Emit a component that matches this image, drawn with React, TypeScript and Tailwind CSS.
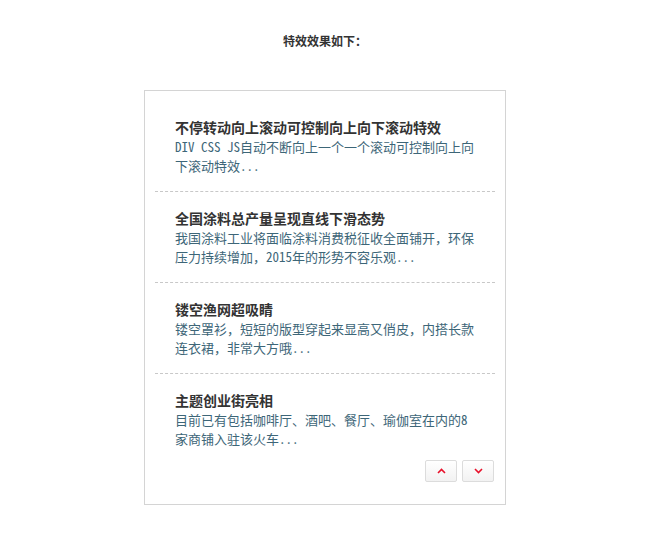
import { useState } from "react";

type News = { title: string; desc: string };

const items: News[] = [
  { title: "不停转动向上滚动可控制向上向下滚动特效", desc: "DIV CSS JS自动不断向上一个一个滚动可控制向上向下滚动特效..." },
  { title: "全国涂料总产量呈现直线下滑态势", desc: "我国涂料工业将面临涂料消费税征收全面铺开，环保压力持续增加，2015年的形势不容乐观..." },
  { title: "镂空渔网超吸睛", desc: "镂空罩衫，短短的版型穿起来显高又俏皮，内搭长款连衣裙，非常大方哦..." },
  { title: "主题创业街亮相", desc: "目前已有包括咖啡厅、酒吧、餐厅、瑜伽室在内的8家商铺入驻该火车..." },
];

const Chevron = ({ up }: { up?: boolean }) => (
  <svg width="9" height="6" viewBox="0 0 9 6" fill="none">
    <path d={up ? "M1 5 L4.5 1.5 L8 5" : "M1 1 L4.5 4.5 L8 1"} stroke="#e8102a" strokeWidth="1.6" />
  </svg>
);

export default function App() {
  const [list, setList] = useState(items);

  const up = () => setList((l) => [...l.slice(1), l[0]]);
  const down = () => setList((l) => [l[l.length - 1], ...l.slice(0, -1)]);

  return (
    <div className="min-h-[541px] bg-white pt-[31px]" style={{ fontFamily: '"Noto Sans Mono CJK SC", "Noto Sans CJK SC", sans-serif' }}>
      <div className="text-center text-[12px] leading-[20px] font-bold text-[#333]">特效效果如下：</div>

      <div className="mx-auto mt-[39px] w-[362px] border border-[#d4d4d4] pt-[10px] pb-[22px]">
        {list.map((n, i) => (
          <div
            key={n.title}
            className={`mx-[10px] px-[20px] pt-[16px] ${i < list.length - 1 ? "pb-[16px] border-b border-dashed border-[#c8c8c8]" : "pb-[12px]"}`}
          >
            <div className="text-[14px] leading-[20px] font-bold text-[#333]">{n.title}</div>
            <div className="text-[13px] leading-[19px] text-[#3d6678]">{n.desc}</div>
          </div>
        ))}

        <div className="flex justify-end gap-[5px] pr-[11px]">
          <button onClick={up} className="flex h-[22px] w-[32px] items-center justify-center rounded-[2px] border border-[#dcdcdc] bg-gradient-to-b from-white to-[#f2f2f2]">
            <Chevron up />
          </button>
          <button onClick={down} className="flex h-[22px] w-[32px] items-center justify-center rounded-[2px] border border-[#dcdcdc] bg-gradient-to-b from-white to-[#f2f2f2]">
            <Chevron />
          </button>
        </div>
      </div>
    </div>
  );
}
